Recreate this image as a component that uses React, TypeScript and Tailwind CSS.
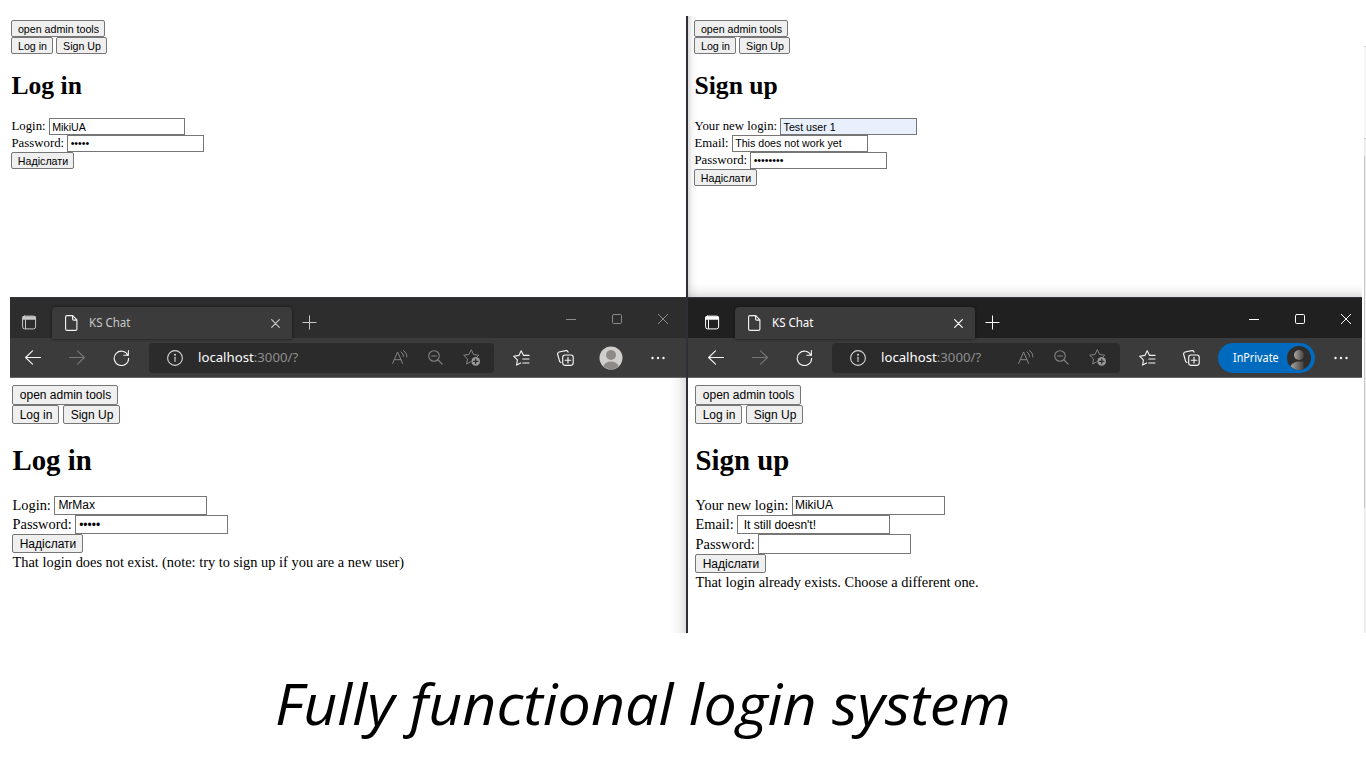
import React from "react";

type FieldProps = { label: string; value: string; h: string; w: string; gap: string; bg?: string; pad?: string; small?: boolean };

function Field({ label, value, h, w, gap, bg = "bg-white", pad = "pl-[2px]", small }: FieldProps) {
  return (
    <div className={`flex items-center ${h} ${gap}`}>
      <span className="-mr-[0.5px] pl-[0.5px]">{label}</span>
      <span className={`flex items-center self-stretch whitespace-pre border border-[#767676] font-['Liberation_Sans',sans-serif] ${small ? "text-[10.67px]" : "text-[12px]"} ${w} ${bg} ${pad}`}>{value}</span>
    </div>
  );
}

function Btn({ children, w, h, small }: { children: React.ReactNode; w: string; h: string; small?: boolean }) {
  return (
    <button className={`flex shrink-0 items-center justify-center whitespace-nowrap rounded-[2px] border border-[#767676] bg-[#efefef] pl-px font-['Liberation_Sans',sans-serif] ${small ? "pt-[2px] text-[10.67px]" : "text-[12px]"} ${w} ${h}`}>{children}</button>
  );
}

function SmallPage({ title, children, ml }: { title: string; children: React.ReactNode; ml: string }) {
  return (
    <div className={`flex flex-col items-start pt-[4px] font-['Liberation_Serif',serif] text-[12.8px] leading-none text-black ${ml}`}>
      <Btn small w="w-[94px]" h="h-[17px]">open admin tools</Btn>
      <div className="flex gap-[3px]">
        <Btn small w="w-[42px]" h="h-[17px]">Log in</Btn>
        <Btn small w="w-[51px]" h="h-[17px]">Sign Up</Btn>
      </div>
      <h1 className="ml-[0.5px] flex h-[64px] items-center text-[25.6px] font-bold">{title}</h1>
      {children}
      <Btn small w="w-[63px]" h="h-[17px]">Надіслати</Btn>
    </div>
  );
}

function LargePage({ title, children, message }: { title: string; children: React.ReactNode; message: string }) {
  return (
    <div className="flex flex-col items-start pt-[7px] font-['Liberation_Serif',serif] text-[14.4px] leading-none text-black">
      <Btn w="w-[106px]" h="h-[20px]">open admin tools</Btn>
      <div className="flex gap-[4px]">
        <Btn w="w-[47px]" h="h-[19px]">Log in</Btn>
        <Btn w="w-[57px]" h="h-[19px]">Sign Up</Btn>
      </div>
      <h1 className="flex h-[72px] items-center pl-[0.5px] text-[28.8px] font-bold">{title}</h1>
      {children}
      <Btn w="w-[71px]" h="h-[19px]">Надіслати</Btn>
      <p className="flex h-[18px] items-center whitespace-nowrap pl-[0.5px]">{message}</p>
    </div>
  );
}

const stroke = { fill: "none", stroke: "currentColor", strokeLinecap: "round" as const, strokeLinejoin: "round" as const };

function Chrome({ priv }: { priv?: boolean }) {
  return (
    <div className="flex h-[81px] flex-col bg-[#3b3b3b] font-['Noto_Sans',sans-serif]">
      <div className={`flex h-[41px] border-t border-[#34363c] ${priv ? "bg-[#202020] text-white" : "bg-[#2d2d2d] text-[#c8c8c8]"}`}>
        <div className={`flex items-end ${priv ? "w-[47px] pl-[17px]" : "w-[42px] pl-[12px]"}`}>
          <svg className="mb-[8px] h-[15px] w-[15px]" viewBox="0 0 15 15" {...stroke}>
            <rect x="0.6" y="1.1" width="13" height="12.8" rx="2" />
            <path d="M1 1.8h12.4v2.500H1z" fill="currentColor" strokeWidth=".8" />
            <path d="M3.500 5v8.5" />
          </svg>
        </div>
        <div className="mt-[9px] flex h-[32px] w-[240px] items-center rounded-t-[4px] bg-[#3b3b3b] pl-[13px] shadow-[0_0_3px_#151515]">
          <svg className="h-[16px] w-[13px]" viewBox="0 0 13 16" {...stroke} stroke="#f3f3f3" strokeWidth="1.15">
            <path d="M2 .6h5.7l4.2 4.2v9.1c0 .8-.6 1.5-1.4 1.5H2c-.8 0-1.4-.7-1.4-1.5V2C.6 1.200 1.200.6 2 .6zM7.600.8V4c0 .7.4 1.100 1.100 1.100h3" />
          </svg>
          <span className={`ml-[11px] w-[170px] text-[12px] ${priv ? "text-white" : "text-[#c8c8c8]"}`}><span className="inline-block origin-left scale-x-[0.96]">KS Chat</span></span>
          <svg className="ml-[12px] h-[9px] w-[9px]" viewBox="0 0 9 9" {...stroke} strokeWidth="1.200"><path d="M.7.7l7.600 7.600M8.300.7L.7 8.300" /></svg>
        </div>
        <svg className="ml-[10px] mt-[17px] h-[15px] w-[15px]" viewBox="0 0 15 15" {...stroke} strokeLinecap="butt"><path d="M7.500.5v14M.5 7.500h14" /></svg>
        <div className={`ml-auto mt-[16px] flex h-[10px] items-center gap-[36px] ${priv ? "mr-[11px] text-white" : "mr-[18px] text-[#8b8b8b]"}`}>
          <svg className="h-[10px] w-[10px]" viewBox="0 0 10 10" {...stroke} strokeLinecap="butt"><path d="M0 5.500h10" /></svg>
          <svg className="h-[10px] w-[10px]" viewBox="0 0 10 10" {...stroke}><rect x=".5" y=".5" width="9" height="9" rx="1.200" /></svg>
          <svg className="h-[10px] w-[10px]" viewBox="0 0 10 10" {...stroke}><path d="M.3.3l9.400 9.400M9.700.3L.3 9.700" /></svg>
        </div>
      </div>
      <div className={`flex h-[40px] items-center border-b border-[#666] text-[#f5f5f5] [&>*]:shrink-0 ${priv ? "pl-[20px] pr-[14px]" : "pl-[15px] pr-[21px]"}`}>
        <svg className="h-[16px] w-[16px]" viewBox="0 0 16 16" {...stroke} strokeWidth="1.100"><path d="M15.500 7.500H.7M7.500.8L.6 7.500l6.900 6.700" /></svg>
        <svg className="ml-[28px] h-[16px] w-[16px] text-[#777]" viewBox="0 0 16 16" {...stroke} strokeWidth="1.100"><path d="M.5 7.500h14.800M8.500.8l6.900 6.700-6.900 6.700" /></svg>
        <svg className="ml-[28px] h-[16px] w-[17px]" viewBox="0 0 17 16" {...stroke} strokeWidth="1.100"><path d="M15 5.500A7.200 7.200 0 1 0 15.600 8.200M15.400.6v4.600h-4.600" /></svg>
        <div className={`ml-[19px] flex h-[30px] items-center rounded-[4px] bg-[#2b2b2b] pl-[18px] [&>*]:shrink-0 ${priv ? "w-[288px]" : "w-[345px]"}`}>
          <svg className="h-[16px] w-[16px]" viewBox="0 0 16 16" {...stroke} stroke="#d5d5d5" strokeWidth="1.100"><circle cx="8" cy="8" r="7.400" /><path d="M8 7.200v4.300" /><circle cx="8" cy="4.700" r=".45" fill="#d5d5d5" /></svg>
          <span className={`ml-[15px] mt-px text-[13px] text-[#8d8d8d] ${priv ? "w-[133px]" : "w-[190px]"}`}><span className="inline-block origin-left scale-x-[1.015]"><span className="text-white">localhost</span>:3000/?</span></span>
          <svg className="ml-[4px] h-[15px] w-[16px] text-[#858585]" viewBox="0 0 16 15" {...stroke}><path d="M.6 13.500L5.600 2l5 11.500M2.300 9.700h6.600M9 2c1.700 1.100 2.500 2.600 2.400 4.500M11.400.6c2.400 1.500 3.500 3.500 3.400 6.300" /></svg>
          <svg className="ml-[20px] h-[15px] w-[15px] text-[#858585]" viewBox="0 0 15 15" {...stroke} strokeWidth="1.100"><circle cx="6" cy="6" r="5.300" /><path d="M3.500 6h5M10 10l4.200 4.200" /></svg>
          <svg className="ml-[20px] h-[17px] w-[18px] text-[#858585]" viewBox="0 0 18 17" {...stroke}><path d="M7.500 12.800L3.700 15l.8-5.100L.7 6.200l5.200-.7L8.300.7l2.300 4.800 5.200.7-1.500 1.500" /><circle cx="12.700" cy="12.400" r="4.300" fill="#989898" stroke="none" /><path d="M10.500 12.400h4.400M12.700 10.200v4.400" stroke="#2b2b2b" strokeWidth="1.200" /></svg>
        </div>
        <svg className="ml-[19px] h-[16px] w-[17px]" viewBox="0 0 17 16" {...stroke} strokeWidth="1.100"><path d="M16 5.400h-5.400L8.200.7 5.900 5.400.6 6.200l3.800 3.700-.8 5.200 4.100-2.200M9.800 9h6.200M9.800 13H16" /></svg>
        <svg className="ml-[27px] h-[16px] w-[17px]" viewBox="0 0 17 16" {...stroke} strokeWidth="1.150"><rect x="5.700" y="5" width="10.500" height="10.300" rx="2.200" /><path d="M11 7.400v5.600M8.200 10.200h5.600M3.900 12.500L2.700 11.600.7 4.500C.4 3.400 1 2.300 2.100 2L8.800.6c1.100-.2 2 .4 2.300 1.600" /></svg>
        {priv ? (
          <div className="ml-[18px] flex h-[30px] w-[97px] items-center justify-between rounded-full bg-[#006abe] pl-[15px] pr-[4px] text-[12px] text-white">
            <span className="inline-block w-[45px] origin-left scale-x-[0.9]">InPrivate</span>
            <svg className="h-[24px] w-[24px] shrink-0" viewBox="0 0 24 24">
              <defs><linearGradient id="person"><stop stopColor="#aaa6a3" /><stop offset="1" stopColor="#45413e" /></linearGradient></defs>
              <circle cx="12" cy="12" r="12" fill="#302e2c" /><circle cx="12" cy="9" r="5" fill="url(#person)" /><path d="M3.500 20.300C5.200 17 8.100 15.500 12 15.500h4.500V23C11.600 24.900 6.900 23.900 3.500 20.300z" fill="url(#person)" />
            </svg>
          </div>
        ) : (
          <svg className="ml-[25px] h-[24px] w-[24px]" viewBox="0 0 24 24"><circle cx="12" cy="12" r="11.500" fill="#d1cfcb" /><circle cx="12" cy="9" r="5" fill="#8e8a87" /><path d="M4.200 20.200C5.800 17 8.300 15.500 12 15.500s6.200 1.500 7.800 4.700c-4.300 4-11.300 4-15.600 0z" fill="#8e8a87" /></svg>
        )}
        <svg className="ml-auto h-[4px] w-[14px]" viewBox="0 0 14 4" fill="currentColor"><circle cx="1.500" cy="2" r="1.200" /><circle cx="7" cy="2" r="1.200" /><circle cx="12.500" cy="2" r="1.200" /></svg>
      </div>
    </div>
  );
}

export default function App() {
  return (
    <main className="flex h-[768px] w-[1366px] flex-col overflow-hidden bg-white pt-[16px]">
      <div className="flex h-[617px] pl-[10px]">
        <section className="flex w-[676px] flex-col">
          <div className="h-[281px]">
            <SmallPage title="Log in" ml="ml-[1px]">
              <Field small label="Login:" value="MikiUA" h="h-[17px]" w="w-[136px]" gap="gap-[4px]" pad="pl-[2px] pt-[2px]" />
              <Field small label="Password:" value="•••••" h="h-[17px]" w="w-[137px]" gap="gap-[3px]" pad="pl-[3px]" />
            </SmallPage>
          </div>
          <Chrome />
          <div className="flex-1 bg-[linear-gradient(to_left,#dedede,#f4f4f4_7px,#ffffff_16px)] pl-[2px]">
            <LargePage title="Log in" message="That login does not exist. (note: try to sign up if you are a new user)">
              <Field label="Login:" value="MrMax" h="h-[19px]" w="w-[153px]" gap="gap-[4px]" pad="pl-[3px] pb-px" />
              <Field label="Password:" value="•••••" h="h-[19px]" w="w-[153px]" gap="gap-[4px]" pad="pl-[3px]" />
            </LargePage>
          </div>
        </section>
        <div className="w-[2px] bg-[#2f3037]" />
        <section className="flex w-[674px] flex-col">
          <div className="h-[281px] bg-[linear-gradient(to_right,rgba(0,0,0,0.14),rgba(0,0,0,0.04)_4px,transparent_10px),linear-gradient(to_top,#dedede,#f4f4f4_6px,#ffffff_14px)]">
            <SmallPage title="Sign up" ml="ml-[6px]">
              <Field small label="Your new login:" value="Test user 1" h="h-[17px]" w="w-[137px]" gap="gap-[3px]" bg="bg-[#e8f0fe]" pad="pl-[3px] pt-[2px]" />
              <Field small label="Email:" value="This does not work yet" h="h-[17px]" w="w-[136px]" gap="gap-[4px]" />
              <Field small label="Password:" value="••••••••" h="h-[17px]" w="w-[137px]" gap="gap-[3px]" pad="pl-[3px]" />
            </SmallPage>
          </div>
          <Chrome priv />
          <div className="flex-1 pl-[7px]">
            <LargePage title="Sign up" message="That login already exists. Choose a different one.">
              <Field label="Your new login:" value="MikiUA" h="h-[19px]" w="w-[153px]" gap="gap-[4px]" pad="pl-[2px] pb-px" />
              <Field label="Email:" value=" It still doesn't!" h="h-[19px]" w="w-[153px]" gap="gap-[4px]" />
              <Field label="Password:" value="" h="h-[20px]" w="w-[153px]" gap="gap-[4px]" />
            </LargePage>
          </div>
        </section>
        <div className="ml-[2px] flex w-[2px] flex-col pt-[30px]">
          <div className="h-[92px] border-t border-[#d0d0d0] bg-[#f6f6f6]" />
          <div className="h-[18px] border-t border-[#d0d0d0] bg-[#eeeeee]" />
          <div className="h-[352px] border-l border-[#c4c4c4] bg-[#f0f0f0]" />
          <div className="flex-1 bg-[#eeeeee]" />
        </div>
      </div>
      <p className="ml-[275px] mt-[30px] w-max origin-left scale-x-[1.056] whitespace-nowrap font-['Open_Sans',sans-serif] text-[56px] italic leading-[80px] text-black">Fully functional login system</p>
    </main>
  );
}
